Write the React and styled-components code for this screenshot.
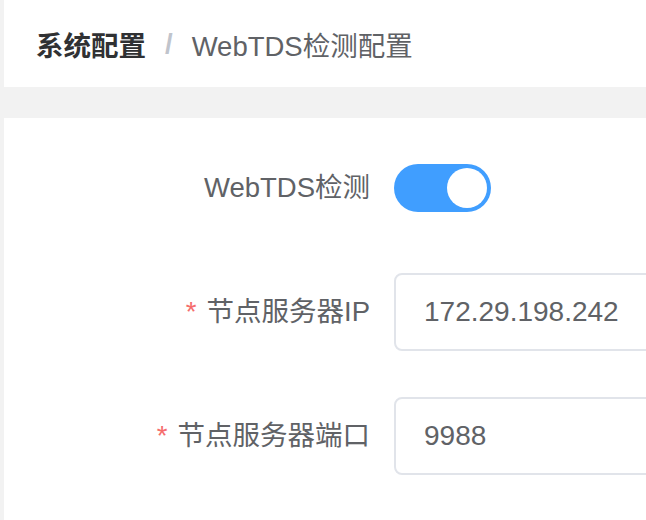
import { useState } from 'react'
import styled, { createGlobalStyle } from 'styled-components'

const GlobalStyle = createGlobalStyle`
	html, body {
		margin: 0;
		padding: 0;
		background: #f2f2f2;
		overflow: hidden;
	}
	body {
		font-family: 'Helvetica Neue', 'Liberation Sans', 'Noto Sans CJK SC', sans-serif;
	}
`

const Page = styled.div`
	padding-left: 4px;
	height: 520px;
	overflow: hidden;
`

const Header = styled.div`
	height: 87px;
	background: #fff;
	display: flex;
	align-items: center;
	padding-left: 32px;
	font-size: 27.5px;
`

const Crumb = styled.span`
	color: ${props => (props.$strong ? '#303133' : '#606266')};
	font-weight: ${props => (props.$strong ? 700 : 400)};
`

const Separator = styled.span`
	color: #c0c4cc;
	font-weight: 700;
	margin: 0 19px 0 19px;
`

const Card = styled.div`
	margin-top: 31px;
	background: #fff;
	padding-top: 30px;
	padding-bottom: 40px;
	width: 900px;
`

const FormItem = styled.div`
	display: flex;
	align-items: center;
	height: 80px;
	margin-bottom: 44px;
`

const Label = styled.label`
	width: 390px;
	box-sizing: border-box;
	padding-right: 24px;
	text-align: right;
	font-size: 27.5px;
	color: #606266;
	line-height: 80px;
`

const Star = styled.span`
	color: #f56c6c;
	margin-right: 10px;
`

const Switch = styled.button`
	width: 97px;
	height: 48px;
	border: none;
	border-radius: 24px;
	padding: 0 4px;
	background: ${props => (props.$on ? '#409eff' : '#dcdfe6')};
	display: flex;
	align-items: center;
	justify-content: ${props => (props.$on ? 'flex-end' : 'flex-start')};
	cursor: pointer;
`

const Knob = styled.span`
	width: 40px;
	height: 40px;
	border-radius: 50%;
	background: #fff;
`

const Input = styled.input`
	width: 420px;
	height: 78px;
	box-sizing: border-box;
	border: 2px solid #e1e4ea;
	border-radius: 8px;
	padding: 0 28px;
	font-family: inherit;
	font-size: 28px;
	color: #606266;
	outline: none;
`

export default function App() {
	const [enabled, setEnabled] = useState(true)
	const [ip, setIp] = useState('172.29.198.242')
	const [port, setPort] = useState('9988')

	return (
		<Page>
			<GlobalStyle />
			<Header>
				<Crumb $strong>系统配置</Crumb>
				<Separator>/</Separator>
				<Crumb>WebTDS检测配置</Crumb>
			</Header>
			<Card>
				<FormItem>
					<Label>WebTDS检测</Label>
					<Switch $on={enabled} onClick={() => setEnabled(!enabled)}>
						<Knob />
					</Switch>
				</FormItem>
				<FormItem>
					<Label>
						<Star>*</Star>节点服务器IP
					</Label>
					<Input value={ip} onChange={ev => setIp(ev.target.value)} />
				</FormItem>
				<FormItem>
					<Label>
						<Star>*</Star>节点服务器端口
					</Label>
					<Input value={port} onChange={ev => setPort(ev.target.value)} />
				</FormItem>
			</Card>
		</Page>
	)
}
